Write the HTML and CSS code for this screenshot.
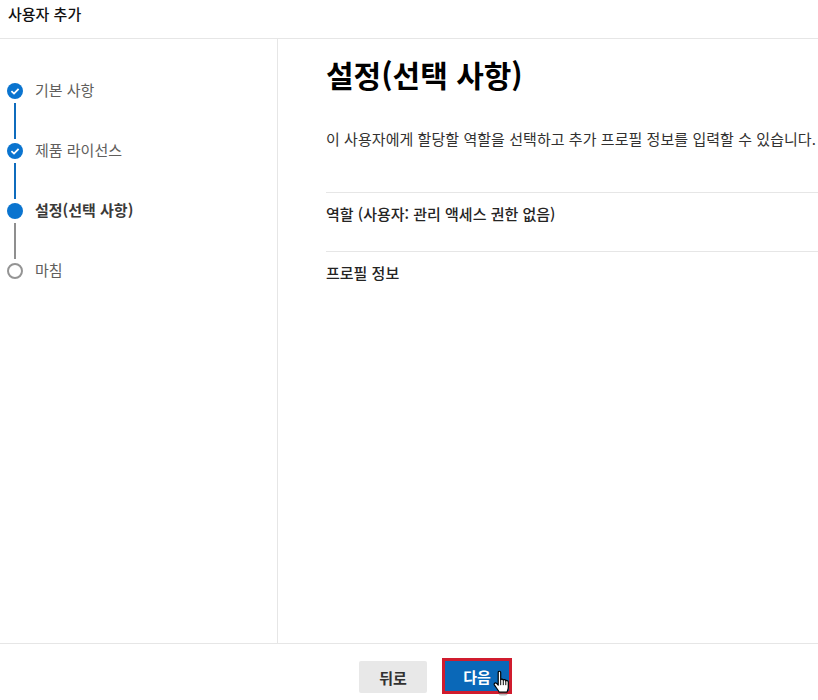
FILE: index.html
```html
<!DOCTYPE html>
<html lang="ko">
<head>
    <meta charset="UTF-8">
    <meta name="viewport" content="width=device-width, initial-scale=1.0">
    <title>사용자 추가</title>
    <link rel="stylesheet" href="styles.css">
</head>
<body>
    <div class="panel-header">사용자 추가</div>

    <div class="panel-body">
        <div class="sidebar">
            <div class="step">
                <div class="step-marker">
                    <svg class="step-icon" viewBox="0 0 16 16">
                        <circle cx="8" cy="8" r="8" fill="#0a74cf"/>
                        <path d="M4.4 8.2 L7 10.6 L11.6 5.8" fill="none" stroke="#fff" stroke-width="1.8"/>
                    </svg>
                    <div class="step-line"></div>
                </div>
                <div class="step-label">기본 사항</div>
            </div>
            <div class="step">
                <div class="step-marker">
                    <svg class="step-icon" viewBox="0 0 16 16">
                        <circle cx="8" cy="8" r="8" fill="#0a74cf"/>
                        <path d="M4.4 8.2 L7 10.6 L11.6 5.8" fill="none" stroke="#fff" stroke-width="1.8"/>
                    </svg>
                    <div class="step-line"></div>
                </div>
                <div class="step-label">제품 라이선스</div>
            </div>
            <div class="step">
                <div class="step-marker">
                    <svg class="step-icon" viewBox="0 0 16 16">
                        <circle cx="8" cy="8" r="8" fill="#0a74cf"/>
                    </svg>
                    <div class="step-line step-line-todo"></div>
                </div>
                <div class="step-label step-label-current">설정(선택 사항)</div>
            </div>
            <div class="step">
                <div class="step-marker">
                    <svg class="step-icon" viewBox="0 0 16 16">
                        <circle cx="8" cy="8" r="7" fill="#fff" stroke="#949494" stroke-width="2"/>
                    </svg>
                </div>
                <div class="step-label">마침</div>
            </div>
        </div>

        <div class="content">
            <h1>설정(선택 사항)</h1>
            <p class="intro">이 사용자에게 할당할 역할을 선택하고 추가 프로필 정보를 입력할 수 있습니다.</p>
            <div class="section">역할 (사용자: 관리 액세스 권한 없음)</div>
            <div class="section">프로필 정보</div>
        </div>
    </div>

    <div class="panel-footer">
        <button class="btn btn-back">뒤로</button>
        <div class="next-wrap">
            <button class="btn btn-next">다음</button>
            <svg class="hand-cursor" viewBox="0 0 18 24">
                <path d="M5.5 2.2 C5.5 0.8 7.8 0.8 7.8 2.2 L7.8 9 C8.2 8.2 10 8.2 10.2 9.4 C10.6 8.6 12.3 8.7 12.5 10 C13 9.4 14.8 9.6 14.8 11 L14.8 16 C14.8 18 14 19 13.6 20.5 L6.4 20.5 C5.6 18.5 3.8 16.6 2 14 C1 12.4 2.8 11.2 4 12.4 L5.5 14 Z" fill="#fff" stroke="#000" stroke-width="1.1" stroke-linejoin="round"/>
                <path d="M7.8 9 L7.8 14 M10.2 9.4 L10.2 14 M12.5 10 L12.5 14" fill="none" stroke="#000" stroke-width="0.9"/>
                <ellipse cx="10" cy="22.4" rx="4" ry="1.2" fill="#777" opacity="0.5"/>
            </svg>
        </div>
    </div>
</body>
</html>
```

FILE: styles.css
```css
body {
    margin: 0;
    height: 700px;
    display: flex;
    flex-direction: column;
    overflow: hidden;
    background-color: white;
    font-family: "Noto Sans CJK KR", "Noto Sans", sans-serif;
    color: #323130;
}
.panel-header {
    height: 38px;
    padding-left: 8px;
    border-bottom: 1px solid #e6e6e6;
    font-size: 15px;
    line-height: 28px;
    font-weight: 500;
    color: #111;
}
.panel-body {
    flex: 1;
    display: flex;
    min-height: 0;
}
.sidebar {
    width: 270px;
    flex-shrink: 0;
    padding: 44px 0 0 7px;
    border-right: 1px solid #e6e6e6;
}
.step {
    display: flex;
    height: 60px;
}
.step-marker {
    width: 16px;
    display: flex;
    flex-direction: column;
    align-items: center;
}
.step-icon {
    width: 16px;
    height: 16px;
    flex-shrink: 0;
}
.step-line {
    width: 2px;
    height: 36px;
    margin-top: 4px;
    background-color: #0f6cbd;
}
.step-line-todo {
    background-color: #8f8f8f;
}
.step-label {
    margin-left: 12px;
    margin-top: -3px;
    font-size: 15px;
    line-height: 20px;
    color: #605e5c;
}
.step-label-current {
    font-weight: 700;
    color: #3b3a39;
}
.content {
    flex: 1;
    min-width: 0;
    padding-left: 48px;
    overflow: hidden;
}
.content h1 {
    margin: 13px 0 0;
    font-size: 30px;
    line-height: 44px;
    font-weight: 700;
    color: #000;
    white-space: nowrap;
}
.intro {
    margin: 33px 0 0;
    font-size: 15px;
    line-height: 20px;
    letter-spacing: 0.05px;
    white-space: nowrap;
}
.section {
    height: 58px;
    border-top: 1px solid #e6e6e6;
    font-size: 15px;
    line-height: 42px;
    font-weight: 500;
    color: #252423;
}
.intro + .section {
    margin-top: 43px;
}
.panel-footer {
    height: 48px;
    padding: 8px 0 0 53px;
    border-top: 1px solid #e6e6e6;
    display: flex;
    justify-content: center;
    align-items: center;
    gap: 15px;
}
.btn {
    font-family: inherit;
    font-size: 15px;
    font-weight: 700;
    border-radius: 2px;
    cursor: pointer;
}
.btn-back {
    width: 68px;
    height: 32px;
    margin-top: 2px;
    border: none;
    background-color: #e8e8e8;
    color: #323130;
}
.next-wrap {
    position: relative;
    display: flex;
}
.btn-next {
    width: 70px;
    height: 36px;
    border: 3px solid #d01c2e;
    border-radius: 0;
    background-color: #0a68b8;
    color: white;
}
.hand-cursor {
    position: absolute;
    left: 50px;
    top: 12px;
    width: 20px;
    height: 26px;
}
```
